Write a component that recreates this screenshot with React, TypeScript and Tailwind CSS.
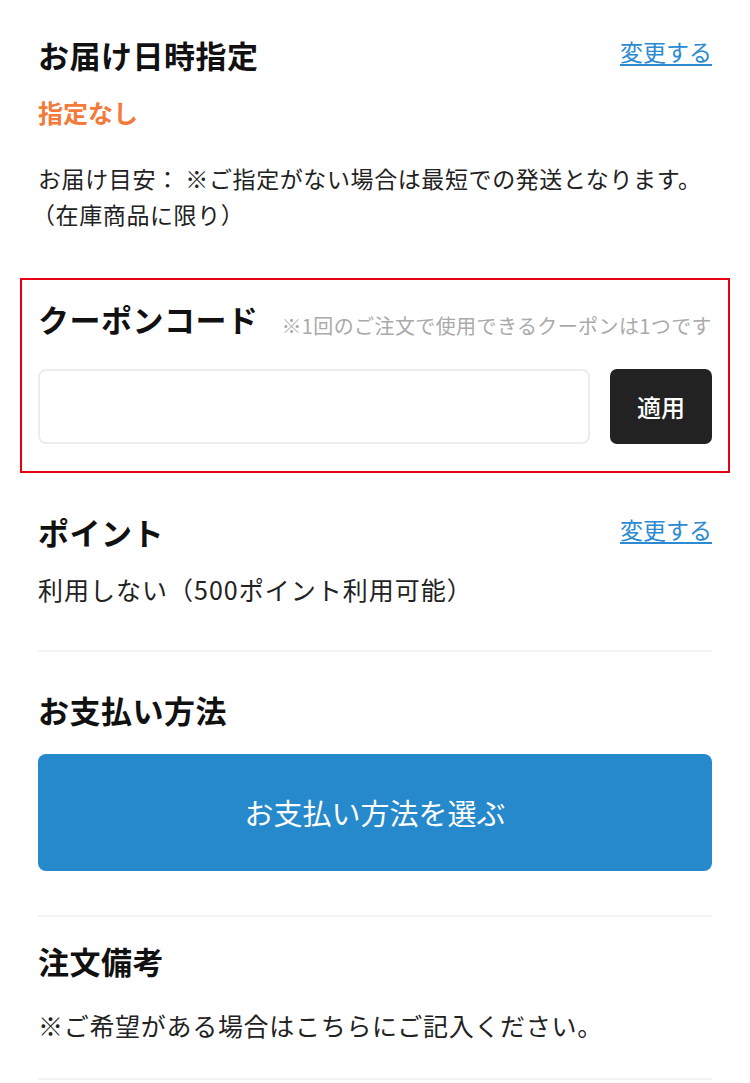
import React from "react";

const font = { fontFamily: '"Noto Sans CJK JP", "Noto Sans", sans-serif' };

function Divider() {
  return <div className="h-[2px] bg-[#f3f3f3]" />;
}

export default function App() {
  return (
    <div className="w-[750px] min-h-[1083px] bg-white text-[#222] font-['Noto_Sans_CJK_JP',sans-serif]">
      {/* お届け日時指定 */}
      <section className="px-[38px] pt-[34px]">
        <div className="flex items-center justify-between">
          <h2 className="text-[31px] leading-[42px] font-bold tracking-[0.5px] text-[#111]">お届け日時指定</h2>
          <a href="#" className="text-[23px] leading-[30px] text-[#2b8ad1] underline underline-offset-[3px] mb-[8px]">変更する</a>
        </div>
        <p className="mt-[18px] text-[25px] leading-[36px] font-bold text-[#f47a3a]">指定なし</p>
        <p className="mt-[30px] text-[23px] leading-[36px] tracking-[0.6px] text-[#222]">
          お届け目安： ※ご指定がない場合は最短での発送となります。
          <br />
          <span className="-ml-[6px]">（在庫商品に限り）</span>
        </p>
      </section>

      {/* クーポンコード */}
      <section className="mx-[20px] mt-[46px] border-2 border-[#e60012] px-[16px] pt-[18px] pb-[27px]">
        <div className="flex items-end justify-between">
          <h2 className="text-[31px] leading-[42px] font-bold tracking-[0.5px] text-[#111] whitespace-nowrap">クーポンコード</h2>
          <span className="text-[20px] leading-[24px] tracking-[0.4px] text-[#aaa] whitespace-nowrap mb-[2px]">※1回のご注文で使用できるクーポンは1つです</span>
        </div>
        <div className="mt-[29px] flex gap-[20px]">
          <input className="h-[75px] flex-1 rounded-[8px] border-2 border-[#ececec] px-3 text-[22px] outline-none" style={font} />
          <button className="h-[75px] w-[102px] rounded-[7px] bg-[#222] text-[24px] font-medium text-white">適用</button>
        </div>
      </section>

      {/* ポイント */}
      <section className="px-[38px] pt-[38px]">
        <div className="flex items-center justify-between">
          <h2 className="text-[31px] leading-[42px] font-bold tracking-[0.5px] text-[#111]">ポイント</h2>
          <a href="#" className="text-[23px] leading-[30px] text-[#2b8ad1] underline underline-offset-[3px] mb-[6px]">変更する</a>
        </div>
        <p className="mt-[18px] text-[25px] leading-[36px] tracking-[1px]">利用しない（500ポイント利用可能）</p>
        <div className="mt-[43px]">
          <Divider />
        </div>
      </section>

      {/* お支払い方法 */}
      <section className="px-[38px] pt-[37px]">
        <h2 className="text-[31px] leading-[42px] font-bold tracking-[0.5px] text-[#111]">お支払い方法</h2>
        <button className="mt-[23px] flex h-[117px] w-full items-center justify-center rounded-[8px] bg-[#2589cb] text-[29px] text-white">
          お支払い方法を選ぶ
        </button>
        <div className="mt-[44px]">
          <Divider />
        </div>
      </section>

      {/* 注文備考 */}
      <section className="px-[38px] pt-[23px]">
        <h2 className="text-[31px] leading-[42px] font-bold tracking-[0.5px] text-[#111]">注文備考</h2>
        <p className="mt-[25px] text-[25px] leading-[36px] tracking-[0.7px]">※ご希望がある場合はこちらにご記入ください。</p>
        <div className="mt-[35px]">
          <Divider />
        </div>
      </section>
    </div>
  );
}
